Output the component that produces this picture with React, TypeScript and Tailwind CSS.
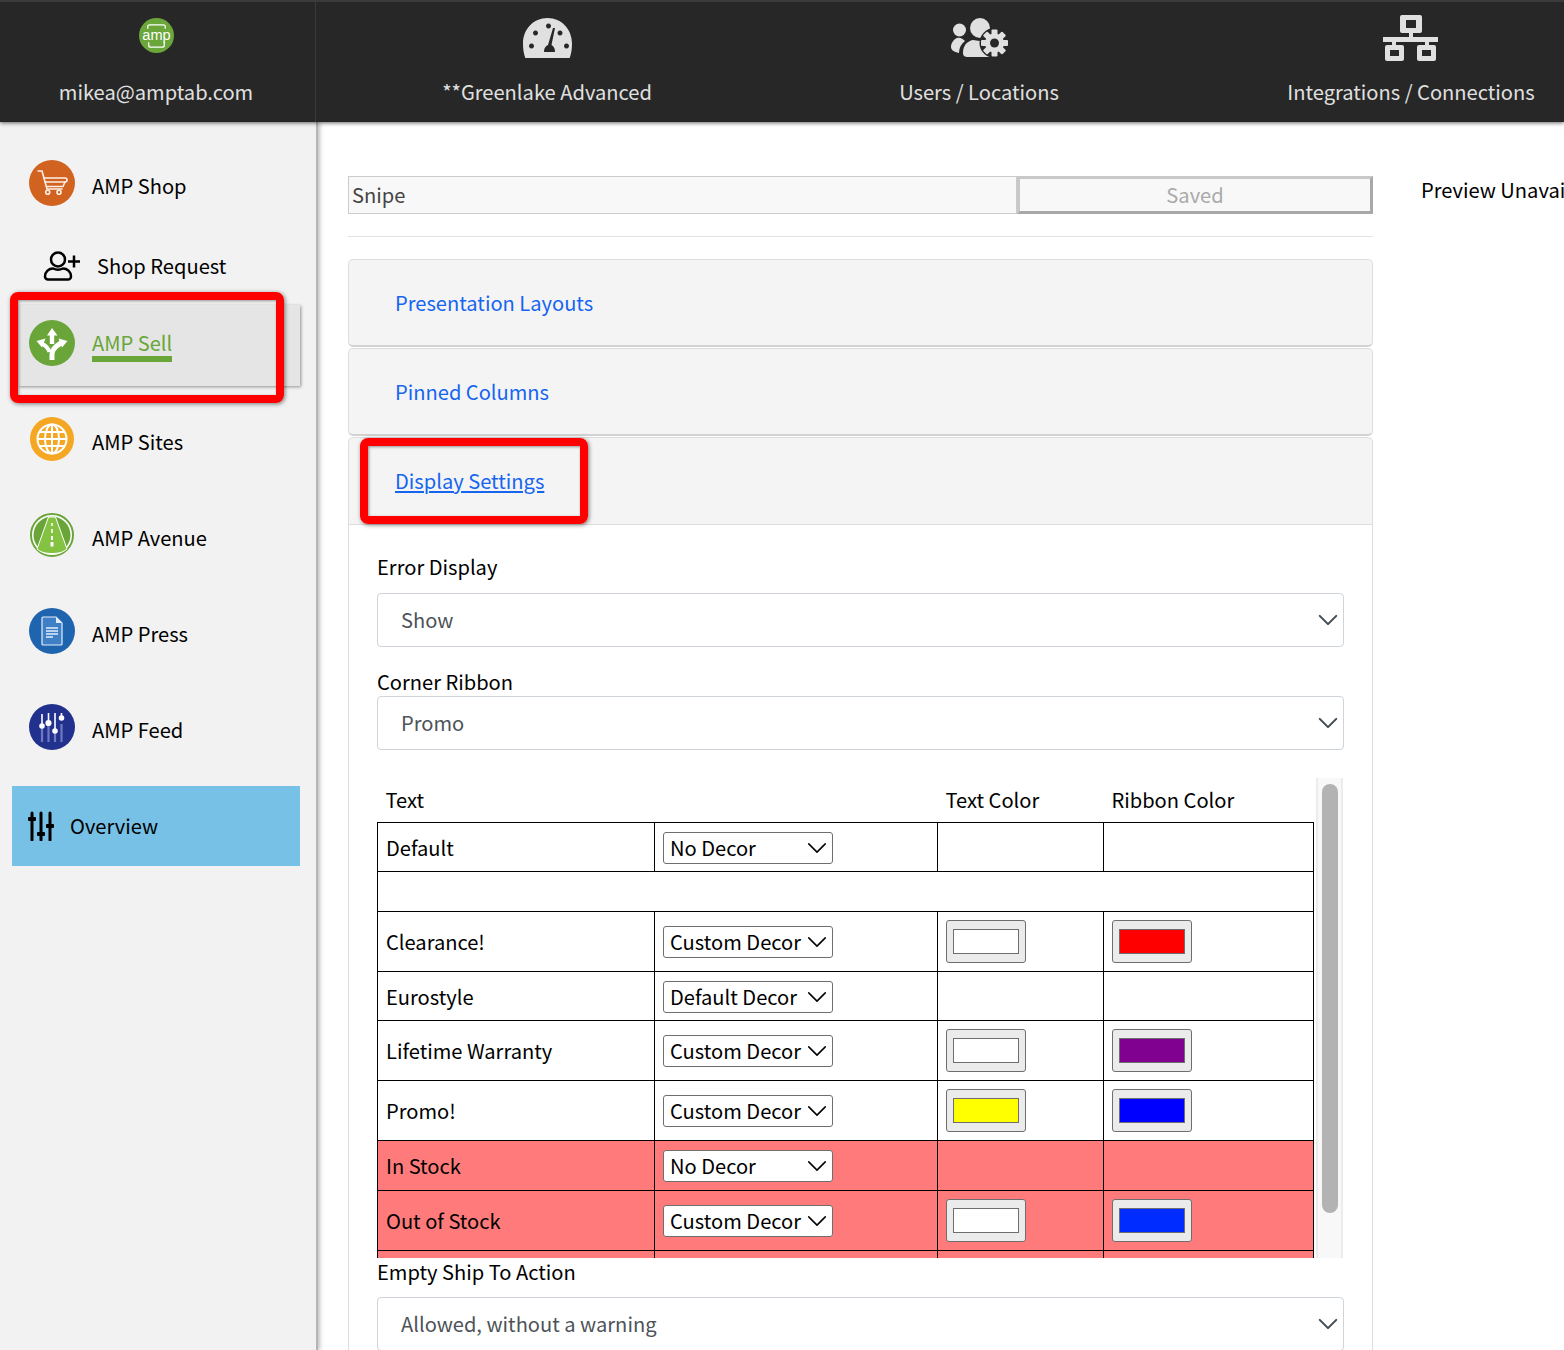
import React from 'react';

const Chevron = ({ className, strokeWidth }: { className: string; strokeWidth: number }) => (
  <svg viewBox="0 0 16 16" className={className}>
    <path d="M2 5l6 6 6-6" fill="none" stroke="currentColor" strokeWidth={strokeWidth} strokeLinecap="round" strokeLinejoin="round" />
  </svg>
);

const AmpLogo = () => (
  <svg viewBox="0 0 36 36" className="w-[35px] h-[35px]">
    <circle cx="18" cy="18" r="18" fill="#6aa63a" />
    <path d="M9 11V9a2 2 0 0 1 2-2h14a2 2 0 0 1 2 2v2M10 25v3a2 2 0 0 0 2 2h12a2 2 0 0 0 2-2v-3" fill="none" stroke="#fff" strokeWidth="1.3" />
    <text x="18" y="22.500" textAnchor="middle" fontSize="15" fill="#fff" fontFamily="Liberation Sans, sans-serif">amp</text>
  </svg>
);

const GaugeIcon = () => (
  <svg viewBox="0 0 51 40" className="w-[51px] h-[40px]">
    <path fillRule="evenodd" fill="#e0e0e0" d="M25.5 0C11.4 0 1 11.400 1 25.500c0 5 .6 10 2.300 14.500h44.400C49.400 35.500 50 30.500 50 25.500 50 11.400 39.600 0 25.500 0ZM26.500 5.500a2.500 2.500 0 1 0 .01 0ZM13.500 12.500a2.500 2.500 0 1 0 .01 0ZM9.500 25.500a2.500 2.500 0 1 0 .01 0ZM44.500 25.500a2.500 2.500 0 1 0 .01 0ZM38 12.500a2.500 2.500 0 1 0 .01 0ZM33 10l-3.500 17c2 1 3.500 3 3.500 7H22c0-4 1.500-6 4-7l5-17Z" />
  </svg>
);

const UsersCogIcon = () => (
  <svg viewBox="0 0 57 40" className="w-[57px] h-[40px]">
    <g fill="#e0e0e0">
      <circle cx="8.500" cy="12" r="6.500" />
      <path d="M6 20c-3 1-6 5-6 9 0 3 3 5 8 6 0-5 2-9 6-12-2-2-5-4-8-3Z" />
      <circle cx="29" cy="10" r="10" />
      <path d="M19 23c-5 2-7 7-7 12 0 3 2 4 5 4h22V23c-3-2-6 0-10 0s-7-2-10 0Z" />
    </g>
    <circle cx="43.500" cy="25" r="15" fill="#272727" />
    <g fill="#e0e0e0">
      <circle cx="43.500" cy="25" r="9.500" />
      {[0, 45, 90, 135, 180, 225, 270, 315].map(a => (
        <rect key={a} x="40.500" y="11.500" width="6" height="6" rx="1" transform={`rotate(${a} 43.500 25)`} />
      ))}
    </g>
    <circle cx="43.500" cy="25" r="4.500" fill="#272727" />
  </svg>
);

const NetworkIcon = () => (
  <svg viewBox="0 0 55 46" className="w-[55px] h-[46px]">
    <g fill="#e0e0e0">
      <path fillRule="evenodd" d="M19 0h18a2 2 0 0 1 2 2v14a2 2 0 0 1-2 2H19a2 2 0 0 1-2-2V2a2 2 0 0 1 2-2Zm4 5v8h10V5Z" />
      <rect x="26" y="18" width="4" height="6" />
      <rect x="0" y="22" width="55" height="5" />
      <rect x="9" y="26" width="4" height="5" />
      <rect x="42" y="26" width="4" height="5" />
      <path fillRule="evenodd" d="M4 30h15a2 2 0 0 1 2 2v12a2 2 0 0 1-2 2H4a2 2 0 0 1-2-2V32a2 2 0 0 1 2-2Zm3 5v6h9v-6Z" />
      <path fillRule="evenodd" d="M36 30h15a2 2 0 0 1 2 2v12a2 2 0 0 1-2 2H36a2 2 0 0 1-2-2V32a2 2 0 0 1 2-2Zm3 5v6h9v-6Z" />
    </g>
  </svg>
);

const CartCircle = () => (
  <svg viewBox="0 0 46 46" className="w-[46px] h-[46px]">
    <circle cx="23" cy="23" r="23" fill="#d2621f" />
    <g fill="none" stroke="#fdf0e8" strokeWidth="1.600" strokeLinecap="round">
      <path d="M9 11h4l5 18h15" />
      <path d="M15 18h21a2 2 0 0 1 0 4H16.500" />
      <path d="M36 22l-2 4.500H17.500" />
      <circle cx="18.700" cy="32.300" r="2" />
      <circle cx="30" cy="32.300" r="2" />
    </g>
  </svg>
);

const SellCircle = () => (
  <svg viewBox="0 0 46 46" className="w-[46px] h-[46px]">
    <circle cx="23" cy="23" r="23" fill="#69a539" />
    <g fill="#fff">
      <path d="M23 8l5.500 7.500H18Z" />
      <rect x="20.800" y="15" width="4.400" height="9" />
      <path d="M7.500 21l9-2.500-3.500 9Z" />
      <path d="M38.500 21l-9-2.500 3.500 9Z" />
    </g>
    <g fill="none" stroke="#fff">
      <path d="M23 40v-6c0-4 4-8 9-11" strokeWidth="5" />
      <path d="M20.500 32c-1-4-4-6.500-8.500-9" strokeWidth="4" />
    </g>
  </svg>
);

const GlobeCircle = () => (
  <svg viewBox="0 0 44 44" className="w-[44px] h-[44px]">
    <circle cx="22" cy="22" r="22" fill="#f5a623" />
    <g fill="none" stroke="#fff" strokeWidth="2">
      <circle cx="22" cy="22" r="14.500" />
      <ellipse cx="22" cy="22" rx="7" ry="14.500" />
      <path d="M22 7.500v29M7.500 22h29M9.500 15h25M9.500 29h25" />
    </g>
  </svg>
);

const RoadCircle = () => (
  <svg viewBox="0 0 44 44" className="w-[44px] h-[44px]">
    <circle cx="22" cy="22" r="21" fill="#fff" stroke="#69a539" strokeWidth="2" />
    <circle cx="22" cy="22" r="18.500" fill="#69a539" />
    <path d="M18.500 4h7L37 36c-4 3.500-9 4.500-15 4.500S11 39.500 7 36Z" fill="#84c341" stroke="#fff" strokeWidth="1" />
    <g fill="#fff">
      <rect x="21.200" y="10" width="1.600" height="3" />
      <rect x="21.200" y="16" width="1.600" height="4" />
      <rect x="21" y="23" width="2" height="4" />
      <rect x="20.500" y="29" width="3" height="4.500" />
    </g>
  </svg>
);

const PressCircle = () => (
  <svg viewBox="0 0 46 46" className="w-[46px] h-[46px]">
    <circle cx="23" cy="23" r="23" fill="#1f64ae" />
    <path d="M14 9h13l6 6v21a1 1 0 0 1-1 1H14a1 1 0 0 1-1-1V10a1 1 0 0 1 1-1Z" fill="#3f7fc6" stroke="#e3eefa" strokeWidth="1.200" />
    <path d="M27 9l6 6h-6Z" fill="#e3eefa" />
    <path d="M17 20h12M17 23h12M17 26h12M17 29h7" stroke="#e3eefa" strokeWidth="1.300" />
  </svg>
);

const FeedCircle = () => (
  <svg viewBox="0 0 46 46" className="w-[46px] h-[46px]">
    <circle cx="23" cy="23" r="23" fill="#23318e" />
    <g stroke="#6f78c0" strokeWidth="2.200">
      <path d="M13 20v18M19.500 18v20M26 26v12M32.500 20v18" />
    </g>
    <g stroke="#fff" strokeWidth="1.600" fill="#fff">
      <path d="M13 10v12M19.500 9v8M26 9v16M32.500 9v4" fill="none" />
      <circle cx="13" cy="22" r="2" />
      <circle cx="19.500" cy="19" r="2.300" />
      <circle cx="26" cy="27" r="2" />
      <circle cx="32.500" cy="14" r="2" />
    </g>
  </svg>
);

const PersonPlus = () => (
  <svg viewBox="0 0 38 30" className="w-[38px] h-[30px]">
    <g fill="none" stroke="#000" strokeWidth="2.500">
      <circle cx="15" cy="8.500" r="7" />
      <path d="M5 28.500h20a3 3 0 0 0 3-3c0-5-4-8-8-8-3 1.500-7 1.500-10 0-4 0-8 3-8 8a3 3 0 0 0 3 3Z" />
      <path d="M31 4.500v12M25 10.500h12" />
    </g>
  </svg>
);

const SlidersIcon = () => (
  <svg viewBox="0 0 26 30" className="w-[26px] h-[30px]">
    <g stroke="#000" strokeWidth="3" strokeLinecap="round" fill="#000">
      <path d="M4 2v27M13 2v27M22 2v27" fill="none" />
    </g>
    <rect x="0" y="6" width="8" height="4" rx="1" />
    <rect x="9" y="21" width="8" height="4" rx="1" />
    <rect x="18" y="13" width="8" height="4" rx="1" />
  </svg>
);

const navItems = [
  { label: 'AMP Sites', icon: <GlobeCircle /> },
  { label: 'AMP Avenue', icon: <RoadCircle /> },
  { label: 'AMP Press', icon: <PressCircle /> },
  { label: 'AMP Feed', icon: <FeedCircle /> },
];

const Select = ({ value }: { value: string }) => (
  <div className="w-[967px] h-[53.5px] bg-white border border-[#ced4da] rounded-[4px] flex items-center justify-between pl-[23px] pr-[4px] text-[#4d5358]">
    <span>{value}</span>
    <Chevron className="w-[22px] h-[22px] text-[#444c54]" strokeWidth={1.5} />
  </div>
);

const DecorSelect = ({ value }: { value: string }) => (
  <div className="w-[170px] h-[32px] bg-white border border-[#6e6e6e] rounded-[3px] flex items-center justify-between pl-[6px] pr-[4px] text-black">
    <span className="whitespace-nowrap">{value}</span>
    <Chevron className="w-[22px] h-[22px] flex-none text-black" strokeWidth={1.1} />
  </div>
);

const Swatch = ({ color }: { color: string }) => (
  <div className="w-[80px] h-[43px] bg-[#ebebeb] border border-[#6e6e6e] rounded-[3px] flex items-center justify-center">
    <div className={`w-[66px] h-[25px] border border-[#6e6e6e] ${color}`} />
  </div>
);

type Row = { name: string; decor: string; text?: string; ribbon?: string; h: string; red?: boolean };

const rows: Row[] = [
  { name: 'Clearance!', decor: 'Custom Decor', text: 'bg-white', ribbon: 'bg-[#ff0000]', h: 'h-[60px]' },
  { name: 'Eurostyle', decor: 'Default Decor', h: 'h-[49px]' },
  { name: 'Lifetime Warranty', decor: 'Custom Decor', text: 'bg-white', ribbon: 'bg-[#800090]', h: 'h-[60px]' },
  { name: 'Promo!', decor: 'Custom Decor', text: 'bg-[#ffff00]', ribbon: 'bg-[#0000ff]', h: 'h-[60px]' },
  { name: 'In Stock', decor: 'No Decor', h: 'h-[50px]', red: true },
  { name: 'Out of Stock', decor: 'Custom Decor', text: 'bg-white', ribbon: 'bg-[#002cff]', h: 'h-[60px]', red: true },
];

const cell = 'border border-black px-[8px] align-middle';
const textCell = 'border border-black px-[8px] pt-[2px] align-middle';

const App: React.FC = () => {
  return (
    <div className="w-full h-[1350px] overflow-hidden flex flex-col bg-white text-black text-[20.1px] leading-[30px] font-['Noto_Sans_CJK_SC','Noto_Sans',sans-serif]">
      <header className="h-[122px] flex-none flex bg-[#272727] border-t-2 border-[#3a3a3a] text-[#e0e0e0] relative z-20 shadow-[0_1px_4px_rgba(0,0,0,0.6)]">
        <div className="w-[316px] flex-none border-r border-[#3a3a3a] flex flex-col items-center pt-[16px] pr-[3px]">
          <div className="h-[60px]"><AmpLogo /></div>
          <span className="mt-[-1px]">mikea@amptab.com</span>
        </div>
        <div className="flex pl-[15px]">
          <div className="w-[432px] flex-none flex flex-col items-center pt-[16px]">
            <div className="h-[60px]"><GaugeIcon /></div>
            <span className="mt-[-1px]">**Greenlake Advanced</span>
          </div>
          <div className="w-[432px] flex-none flex flex-col items-center pt-[16px]">
            <div className="h-[60px]"><UsersCogIcon /></div>
            <span className="mt-[-1px]">Users / Locations</span>
          </div>
          <div className="w-[432px] flex-none flex flex-col items-center pt-[13px]">
            <div className="h-[63px] mr-[2px]"><NetworkIcon /></div>
            <span className="mt-[-1px] whitespace-nowrap">Integrations / Connections</span>
          </div>
        </div>
      </header>

      <div className="flex flex-1 min-h-0">
        <aside className="w-[318px] flex-none bg-[#f2f2f2] border-r-2 border-[#b5b5b5] shadow-[2px_0_4px_rgba(0,0,0,0.25)] relative z-10 pt-[13px]">
          <div className="h-[96px] flex items-center pl-[29px]">
            <CartCircle />
            <span className="ml-[17px] pt-[5px]">AMP Shop</span>
          </div>
          <div className="h-[74px] flex items-center pl-[43px] pb-[5px]">
            <PersonPlus />
            <span className="ml-[16px] pt-[1px]">Shop Request</span>
          </div>
          <div className="relative w-[282px] h-[81px] ml-[18px] bg-[#e5e5e5] shadow-[1px_1px_3px_rgba(0,0,0,0.4)] flex items-center pl-[11px] pb-[5px]">
            <SellCircle />
            <span className="ml-[17px] text-[#69a539] border-b-[6px] border-[#69a539] leading-[26px] mt-[6px]">AMP Sell</span>
            <div className="absolute left-[-8px] top-[-13px] w-[274px] h-[111px] border-[8px] border-[#ff0000] rounded-[8px] shadow-[1px_1px_4px_rgba(0,0,0,0.5),inset_1px_1px_3px_rgba(0,0,0,0.4)]" />
          </div>
          <div className="mt-[5px]">
            {navItems.map(item => (
              <div key={item.label} className="h-[96px] flex items-center pl-[29px]">
                <div className="w-[46px] flex-none flex justify-center">{item.icon}</div>
                <span className="ml-[17px] pt-[5px]">{item.label}</span>
              </div>
            ))}
          </div>
          <div className="mt-[11px] ml-[12px] w-[288px] h-[80px] bg-[#76c1e5] flex items-center pl-[16px]">
            <SlidersIcon />
            <span className="ml-[16px]">Overview</span>
          </div>
        </aside>

        <main className="flex-1 min-w-0 flex pl-[30px] pt-[54px] overflow-hidden">
          <div className="w-[1025px] flex-none">
            <div className="flex h-[38px]">
              <div className="w-[669px] bg-[#f8f8f8] border border-[#cccccc] flex items-center pl-[3px] text-[#444444]">Snipe</div>
              <div className="flex-1 bg-[#f8f8f8] border-[3px] border-t-[#c8c8c8] border-l-[#c8c8c8] border-r-[#a8a8a8] border-b-[#a8a8a8] flex items-center justify-center text-[#aaaaaa]">Saved</div>
            </div>
            <hr className="mt-[22px] mb-[22px] border-t border-[#e2e2e2]" />
            <div className="h-[88px] bg-[#f4f4f4] border border-[#dddddd] border-b-2 border-b-[#d2d2d2] rounded-[5px] flex items-center pl-[46px] pt-[1px] text-[#1565f0]">Presentation Layouts</div>
            <div className="h-[88px] mt-[1px] bg-[#f4f4f4] border border-[#dddddd] border-b-2 border-b-[#d2d2d2] rounded-[5px] flex items-center pl-[46px] pt-[1px] text-[#1565f0]">Pinned Columns</div>
            <div className="mt-[1px] border-x border-[#dddddd] rounded-t-[5px]">
              <div className="relative h-[88px] bg-[#f4f4f4] border-t border-b border-[#dddddd] rounded-t-[5px] flex items-center pl-[46px] pb-[1px] text-[#1565f0]">
                <span className="underline">Display Settings</span>
                <div className="absolute left-[11px] top-0 w-[228px] h-[86px] border-[8px] border-[#ff0000] rounded-[8px] shadow-[1px_1px_4px_rgba(0,0,0,0.5),inset_1px_1px_3px_rgba(0,0,0,0.4)]" />
              </div>
              <div className="pl-[28px] pt-[27px] pb-[40px]">
                <div className="mb-[11px] leading-[30px]">Error Display</div>
                <Select value="Show" />
                <div className="mt-[20.5px] mb-[-1px] leading-[30px]">Corner Ribbon</div>
                <Select value="Promo" />
                <div className="mt-[28.5px] w-[966px] h-[480px] overflow-hidden flex">
                  <table className="w-[936px] h-fit flex-none table-fixed border-collapse">
                    <colgroup>
                      <col className="w-[277px]" />
                      <col className="w-[283px]" />
                      <col className="w-[166px]" />
                      <col className="w-[210px]" />
                    </colgroup>
                    <thead>
                      <tr className="h-[44px] text-left">
                        <th className="font-normal px-[8px]">Text</th>
                        <th />
                        <th className="font-normal px-[8px]">Text Color</th>
                        <th className="font-normal px-[8px]">Ribbon Color</th>
                      </tr>
                    </thead>
                    <tbody>
                      <tr className="h-[49px]">
                        <td className={textCell}>Default</td>
                        <td className={textCell}><DecorSelect value="No Decor" /></td>
                        <td className={cell} />
                        <td className={cell} />
                      </tr>
                      <tr className="h-[40px]">
                        <td colSpan={4} className={cell} />
                      </tr>
                      {rows.map(row => (
                        <tr key={row.name} className={`${row.h} ${row.red ? 'bg-[#ff7b7b]' : ''}`}>
                          <td className={textCell}>{row.name}</td>
                          <td className={textCell}><DecorSelect value={row.decor} /></td>
                          <td className={cell}>{row.text && <Swatch color={row.text} />}</td>
                          <td className={cell}>{row.ribbon && <Swatch color={row.ribbon} />}</td>
                        </tr>
                      ))}
                      <tr className="h-[49px] bg-[#ff7b7b]">
                        <td className={cell} />
                        <td className={cell} />
                        <td className={cell} />
                        <td className={cell} />
                      </tr>
                    </tbody>
                  </table>
                  <div className="ml-[2px] w-[28px] h-full bg-[#f8f8f8] border-x-2 border-[#ececec] pl-[4px] pt-[6px]">
                    <div className="w-[16px] h-[429px] bg-[#b3b3b3] rounded-full" />
                  </div>
                </div>
                <div className="mt-[-1px] mb-[10px] leading-[30px]">Empty Ship To Action</div>
                <Select value="Allowed, without a warning" />
              </div>
            </div>
          </div>
          <div className="ml-[48px] whitespace-nowrap mt-[-1px]">Preview Unavailable</div>
        </main>
      </div>
    </div>
  );
};

export default App;
